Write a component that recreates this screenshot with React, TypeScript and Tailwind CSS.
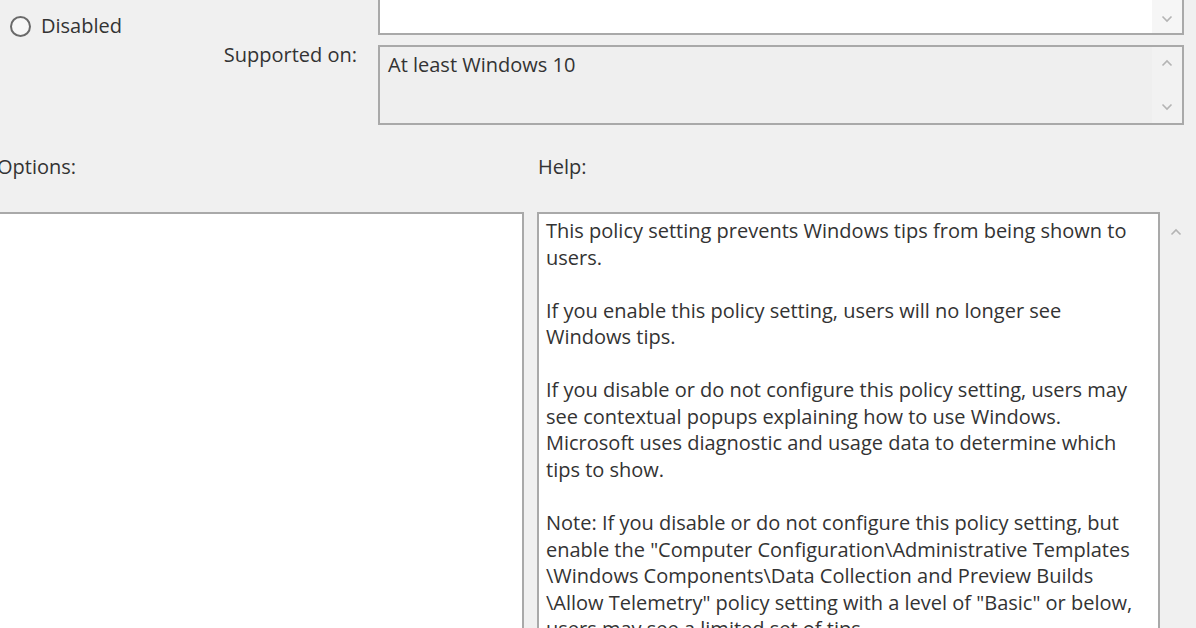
import React from "react";

const FONT = "font-['Segoe_UI','Open_Sans','Noto_Sans',sans-serif]";

// Help pane text, one entry per rendered line ("" = paragraph gap)
const HELP_LINES = [
  "This policy setting prevents Windows tips from being shown to",
  "users.",
  "",
  "If you enable this policy setting, users will no longer see",
  "Windows tips.",
  "",
  "If you disable or do not configure this policy setting, users may",
  "see contextual popups explaining how to use Windows.",
  "Microsoft uses diagnostic and usage data to determine which",
  "tips to show.",
  "",
  "Note: If you disable or do not configure this policy setting, but",
  'enable the "Computer Configuration\\Administrative Templates',
  "\\Windows Components\\Data Collection and Preview Builds",
  '\\Allow Telemetry" policy setting with a level of "Basic" or below,',
  "users may see a limited set of tips.",
];

const Chevron: React.FC<{ up?: boolean }> = ({ up }) => (
  <svg width="12" height="8" viewBox="0 0 12 8" className="block">
    <path
      d={up ? "M1.5 6.5 L6 2 L10.5 6.5" : "M1.5 1.5 L6 6 L10.5 1.5"}
      fill="none"
      stroke="#b4b4b4"
      strokeWidth="1.6"
    />
  </svg>
);

export default function App() {
  return (
    <div
      className={`${FONT} w-[1196px] h-[628px] overflow-hidden bg-[#f0f0f0] text-[#333333] text-[20px] leading-[26px]`}
    >
      {/* Disabled radio + comment box */}
      <div className="flex">
        <div className="w-[378px] flex items-center gap-[10px] pl-[10px] pt-[13px] self-start">
          <span className="w-[21px] h-[21px] rounded-full border-[2px] border-[#6a6a6a] bg-[#f7f7f7]" />
          <span>Disabled</span>
        </div>
        <div className="w-[806px] h-[35px] bg-white border-x-2 border-b-2 border-[#a9a9a9] flex justify-end">
          <div className="w-[30px] bg-[#f6f6f6] flex items-end justify-center pb-[10px]">
            <Chevron />
          </div>
        </div>
      </div>

      {/* Supported on */}
      <div className="flex mt-[6px]">
        <div className="w-[378px] text-right pr-[21px] leading-[20px]">Supported on:</div>
        <div className="w-[806px] h-[80px] bg-[#efefef] border-2 border-[#a9a9a9] flex">
          <div className="flex-1 pl-[8px] pt-[5px]">At least Windows 10</div>
          <div className="w-[30px] bg-[#f2f2f2] flex flex-col items-center justify-between py-[12px]">
            <Chevron up />
            <Chevron />
          </div>
        </div>
      </div>

      {/* Section labels */}
      <div className="flex mt-[29px]">
        <div className="w-[541px] -ml-[3px]">Options:</div>
        <div>Help:</div>
      </div>

      {/* Options and Help panes */}
      <div className="flex mt-[32px] h-[460px]">
        <div className="w-[526px] -ml-[2px] bg-white border-2 border-[#a9a9a9]" />
        <div className="w-[623px] ml-[13px] bg-white border-2 border-[#a9a9a9] pl-[7px] pt-[4px]">
          {HELP_LINES.map((line, i) => (
            <div key={i} className="whitespace-nowrap h-[26.55px]">
              {line}
            </div>
          ))}
        </div>
        <div className="w-[32px] flex justify-center pt-[16px]">
          <Chevron up />
        </div>
      </div>
    </div>
  );
}
